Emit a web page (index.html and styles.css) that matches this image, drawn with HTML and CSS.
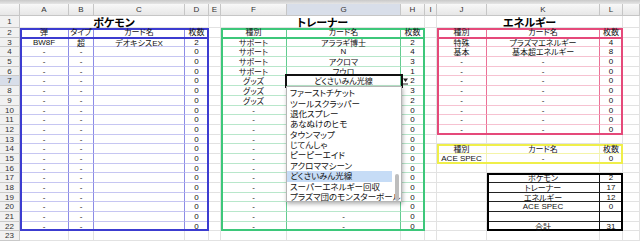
FILE: index.html
```html
<!DOCTYPE html>
<html lang="ja">
<head>
    <meta charset="UTF-8">
    <title>デッキリスト</title>
    <link rel="stylesheet" href="styles.css">
</head>
<body>
    <div class="strip"></div>
    <div class="sheet" id="sheet">
        <div class="box head box-blue-head"></div>
        <div class="box body box-blue-body"></div>
        <div class="box head box-green-head"></div>
        <div class="box body box-green-body"></div>
        <div class="box head box-pink-head"></div>
        <div class="box body box-pink-body"></div>
        <div class="box box-yellow"></div>
        <div class="box box-black"></div>
    </div>

    <script>
        const sheet = document.getElementById('sheet');
        const letters = ['', 'A', 'B', 'C', 'D', 'E', 'F', 'G', 'H', 'I', 'J', 'K', 'L', ''];

        function cell(row, col, text, cls, span) {
            const d = document.createElement('div');
            d.className = 'c ' + (cls || '');
            d.style.gridRow = row;
            d.style.gridColumn = span ? col + ' / span ' + span : col;
            if (text) {
                const s = document.createElement('span');
                // Japanese glyphs sit higher than Latin ones, nudge them down
                s.className = /[^\x00-\x7f]/.test(text) ? 'tx ja' : 'tx';
                s.textContent = text;
                d.appendChild(s);
            }
            sheet.appendChild(d);
            return d;
        }

        // which coloured table a cell belongs to (col: A = 1)
        function region(r, c) {
            if (c >= 1 && c <= 4 && r >= 2 && r <= 22) return 'blue';
            if (c >= 6 && c <= 8 && r >= 2 && r <= 22) return 'green';
            if (c >= 10 && c <= 12 && r >= 2 && r <= 12) return 'pink';
            if (c >= 10 && c <= 12 && r >= 14 && r <= 15) return 'yellow';
            if (c >= 11 && c <= 12 && r >= 17 && r <= 22) return 'black';
            return '';
        }

        // sheet data, columns A..L
        const rows = {};
        rows[2] = ['弾', 'タイプ', 'カード名', '枚数', '', '種別', 'カード名', '枚数', '', '種別', 'カード名', '枚数'];
        for (let r = 3; r <= 22; r++) {
            const energy = r <= 12 ? ['-', '-', '0'] : ['', '', ''];
            // G8..G20 sit under the open list
            const g = r >= 8 && r <= 20 ? '' : '-';
            rows[r] = ['-', '-', '', '0', '', '-', g, '0', ''].concat(energy);
        }
        rows[3] = ['BW8F', '超', 'デオキシスEX', '2', '', 'サポート', 'アララギ博士', '2', '', '特殊', 'プラズマエネルギー', '4'];
        rows[4].splice(5, 3, 'サポート', 'N', '4');
        rows[4].splice(9, 3, '基本', '基本超エネルギー', '8');
        rows[5].splice(5, 3, 'サポート', 'アクロマ', '3');
        rows[6].splice(5, 3, 'サポート', 'フウロ', '1');
        rows[7].splice(5, 3, 'グッズ', 'どくさいみん光線', '2');
        rows[8].splice(5, 3, 'グッズ', '', '3');
        rows[9].splice(5, 3, 'グッズ', '', '2');
        rows[14].splice(9, 3, '種別', 'カード名', '枚数');
        rows[15].splice(9, 3, 'ACE SPEC', '-', '0');
        rows[17].splice(9, 3, '', 'ポケモン', '2');
        rows[18].splice(9, 3, '', 'トレーナー', '17');
        rows[19].splice(9, 3, '', 'エネルギー', '12');
        rows[20].splice(9, 3, '', 'ACE SPEC', '0');
        rows[22].splice(9, 3, '', '合計', '31');

        // column headers
        letters.forEach((l, i) => cell(1, i + 1, l, i === 0 ? 'hd corner' : (l === 'G' ? 'hd on' : 'hd')));

        // row 1: titles
        cell(2, 1, '1', 'rh');
        cell(2, 2, 'ポケモン', 'title', 4);
        cell(2, 6, '');
        cell(2, 7, 'トレーナー', 'title', 3);
        cell(2, 10, '');
        cell(2, 11, 'エネルギー', 'title', 3);
        cell(2, 14, '');

        for (let r = 2; r <= 23; r++) {
            cell(r + 1, 1, String(r), r === 7 ? 'rh on' : 'rh');
            const vals = rows[r] || [];
            for (let c = 1; c <= 13; c++) {
                const d = cell(r + 1, c + 1, vals[c - 1] || '', region(r, c));
                if (r === 2) d.classList.add('top');
                if (r === 7 && c === 7) d.classList.add('sel');
            }
        }

        // list validation dropdown on G7
        const items = ['ファーストチケット', 'ツールスクラッパー', '退化スプレー', 'あなぬけのヒモ', 'タウンマップ',
            'じてんしゃ', 'ピーピーエイド', 'アクロママシーン', 'どくさいみん光線', 'スーパーエネルギー回収',
            'プラズマ団のモンスターボール'];
        const sel = sheet.querySelector('.sel');
        const menu = document.createElement('div');
        menu.className = 'menu';
        items.forEach(t => {
            const it = document.createElement('div');
            it.className = t === 'どくさいみん光線' ? 'item on' : 'item';
            it.textContent = t;
            menu.appendChild(it);
        });
        const thumb = document.createElement('div');
        thumb.className = 'thumb';
        menu.appendChild(thumb);
        sel.appendChild(menu);

        const arrow = document.createElement('span');
        arrow.className = 'arrow';
        arrow.innerHTML = '<svg width="5" height="8" viewBox="0 0 5 8"><path d="M0 1.5h5L2.5 5z" fill="#222"/><path d="M0 7h5" stroke="#222" stroke-width="1"/></svg>';
        sel.appendChild(arrow);
    </script>
</body>
</html>
```

FILE: styles.css
```css
body {
    margin: 0;
    background: #fff;
    font-family: "Liberation Sans", "Noto Sans CJK JP", sans-serif;
    overflow: hidden;
}
.strip {
    height: 4px;
    background: linear-gradient(#c9c9c9, #e6e6e6);
}
.sheet {
    display: grid;
    grid-template-columns: 20px 49px 25px 91px 24px 12px 66px 114px 24px 12px 50px 113px 23px 17px;
    grid-template-rows: 12px 12px repeat(22, 9.7px);
    font-size: 8px;
    font-feature-settings: "palt";
}
.c {
    position: relative;
    box-sizing: border-box;
    border-right: 1px solid #e2e2e2;
    border-bottom: 1px solid #e2e2e2;
    color: #111;
}
/* text is centred on the cell and drawn over the table frames */
.tx {
    position: absolute;
    left: 0;
    right: 0;
    top: calc(50% + 0.7px);
    transform: translateY(-50%);
    text-align: center;
    white-space: nowrap;
    line-height: 1;
    z-index: 3;
}
.tx.ja {
    top: calc(50% + 1.6px);
}
.top .tx.ja {
    top: calc(50% + 0.9px);
}
.title .tx.ja {
    top: calc(50% + 1px);
}
.hd {
    background: linear-gradient(#f8f8f8, #e7e7e7);
    border-color: #c6c6c6;
    color: #333;
}
.rh {
    background: #f1f1f1;
    border-color: #c9c9c9;
    color: #333;
}
.hd.on, .rh.on {
    background: #d8dee9;
}
.title {
    font-size: 11px;
    font-weight: bold;
    color: #000;
}

/* inner lines of the coloured tables */
.blue {
    border-right-color: #8c8ce6;
    border-bottom-color: #c6c6f2;
}
.green {
    border-right-color: #62cc90;
    border-bottom-color: #b8e7cb;
}
.pink {
    border-right-color: #eb7196;
    border-bottom-color: #f6c2d1;
}
.yellow {
    border-right-color: #f2f2b8;
    border-bottom-color: #f4f4a8;
}
.black {
    border-right-color: #111;
    border-bottom-color: #222;
}

.box {
    box-sizing: border-box;
    border: 2px solid;
    z-index: 2;
    pointer-events: none;
}
.box.head {
    border-bottom-width: 1px;
}
.box.body {
    border-top-width: 1px;
}
.box-blue-head { grid-area: 3 / 2 / 4 / 6; border-color: #3c3cd0; }
.box-blue-body { grid-area: 4 / 2 / 24 / 6; border-color: #3c3cd0; }
.box-green-head { grid-area: 3 / 7 / 4 / 10; border-color: #3dc77a; }
.box-green-body { grid-area: 4 / 7 / 24 / 10; border-color: #3dc77a; }
.box-pink-head { grid-area: 3 / 11 / 4 / 14; border-color: #e5497a; }
.box-pink-body { grid-area: 4 / 11 / 14 / 14; border-color: #e5497a; }
.box-yellow { grid-area: 15 / 11 / 17 / 14; border-color: #efef4a; }
.box-black { grid-area: 18 / 12 / 24 / 14; border-color: #000; }

/* selected cell with its list */
.sel {
    outline: 2px solid #111;
    outline-offset: 0;
    z-index: 5;
}
.arrow {
    position: absolute;
    left: calc(100% + 3px);
    top: 1px;
    display: flex;
}
.menu {
    position: absolute;
    left: -1px;
    top: calc(100% + 1px);
    width: 116px;
    height: 116px;
    box-sizing: border-box;
    padding-top: 1px;
    background: #fff;
    border: 1px solid #b5b5b5;
    box-shadow: 1px 2px 4px rgba(0, 0, 0, 0.3);
    z-index: 6;
    font-size: 8.5px;
}
.item {
    height: 10.4px;
    line-height: 10.4px;
    padding-left: 3px;
    margin-right: 9px;
    white-space: nowrap;
    color: #111;
}
.item.on {
    background: #c6dcf6;
}
.thumb {
    position: absolute;
    right: 2px;
    top: 87px;
    width: 4px;
    height: 27px;
    border-radius: 2px;
    background: #bdbdbd;
}
```
